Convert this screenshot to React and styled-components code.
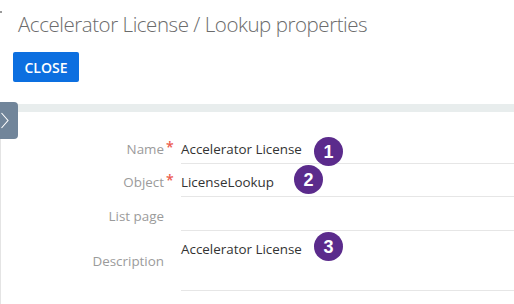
import React from "react";
import styled, { createGlobalStyle } from "styled-components";

const Global = createGlobalStyle`
  html, body { margin: 0; padding: 0; background: #fff; }
  body { font-family: "Open Sans", "Noto Sans", sans-serif; }
  * { box-sizing: border-box; }
`;

const Page = styled.div`
  position: relative;
  width: 514px;
  height: 304px;
  overflow: hidden;
  background: #fff;
`;

const Corner = styled.span`
  position: absolute;
  left: 0;
  top: 11px;
  width: 2px;
  height: 2px;
  background: #9a9a9a;
`;

const Header = styled.header`
  display: flex;
  flex-direction: column;
  align-items: flex-start;
  padding: 10px 0 0 13px;
`;

const Title = styled.h1`
  margin: 0 0 0 5px;
  font-size: 20.5px;
  line-height: 28px;
  font-weight: 300;
  color: #6b6b6b;
  letter-spacing: -0.45px;
  white-space: nowrap;
`;

const CloseButton = styled.button`
  margin-top: 14px;
  width: 66px;
  height: 30px;
  border: none;
  border-radius: 2px;
  background: #0c6fe0;
  color: #fff;
  font-family: "Open Sans", sans-serif;
  font-size: 14px;
  font-weight: 600;
  padding: 0;
  display: flex;
  align-items: center;
  justify-content: center;
`;

const Panel = styled.section`
  position: relative;
  margin-top: 22px;
  border-top: 8px solid #e8eded;
`;

const Body = styled.div`
  border-left: 1px solid #e4e4e4;
  padding-top: 18px;
  height: 200px;
`;

const Toggle = styled.div`
  position: absolute;
  left: 0;
  top: -10px;
  width: 18px;
  height: 37px;
  background: #71859a;
  border-radius: 0 4px 4px 0;
  display: flex;
  align-items: center;
`;

const Row = styled.div`
  display: grid;
  grid-template-columns: 163px 17px 1fr;
  height: ${(p) => p.$h}px;
`;

const Label = styled.div`
  display: flex;
  justify-content: flex-end;
  align-items: ${(p) => (p.$area ? "center" : "flex-end")};
  padding-bottom: ${(p) => (p.$area ? "0" : "6px")};
  font-size: 13.4px;
  line-height: 18px;
  color: #9b9b9b;
  white-space: nowrap;
`;

const Marker = styled.div`
  display: flex;
  align-items: flex-end;
  padding: 0 0 10px 2px;
  color: #ec5b4f;
  font-size: 14px;
  line-height: 14px;
  font-weight: 600;
`;

const Value = styled.div`
  position: relative;
  display: flex;
  align-items: ${(p) => (p.$area ? "flex-start" : "flex-end")};
  padding: ${(p) => (p.$area ? "9px 0 0 0" : "0 0 5px 0")};
  border-bottom: 1px solid #e6e6e6;
  font-size: 13.4px;
  line-height: 18px;
  color: #333;
  white-space: nowrap;
`;

const Badge = styled.span`
  position: absolute;
  left: ${(p) => p.$x}px;
  top: ${(p) => p.$y}px;
  width: 29px;
  height: 29px;
  border-radius: 50%;
  background: #5b2b8c;
  color: #fff;
  font-family: "Liberation Sans", Arial, sans-serif;
  font-weight: 700;
  font-size: 18px;
  display: flex;
  align-items: center;
  justify-content: center;
`;

const rows = [
  { label: "Name", req: true, value: "Accelerator License", h: 34, badge: { n: 1, x: 133, y: 7 } },
  { label: "Object", req: true, value: "LicenseLookup", h: 33, badge: { n: 2, x: 113, y: 1 } },
  { label: "List page", req: false, value: "", h: 34 },
  { label: "Description", req: false, value: "Accelerator License", h: 60, area: true, badge: { n: 3, x: 133, y: 1 } },
];

export default function App() {
  return (
    <>
      <Global />
      <Page>
        <Corner />
        <Header>
          <Title>Accelerator License / Lookup properties</Title>
          <CloseButton>CLOSE</CloseButton>
        </Header>
        <Panel>
          <Toggle>
            <svg width="18" height="37" viewBox="0 0 18 37">
              <polyline points="1.5,11 8,18.5 1.5,26" fill="none" stroke="#fff" strokeWidth="1.1" />
            </svg>
          </Toggle>
          <Body>
            {rows.map((r) => (
              <Row key={r.label} $h={r.h}>
                <Label $area={r.area}>{r.label}</Label>
                <Marker>{r.req ? "*" : ""}</Marker>
                <Value $area={r.area}>
                  {r.value}
                  {r.badge && (
                    <Badge $x={r.badge.x} $y={r.badge.y}>
                      {r.badge.n}
                    </Badge>
                  )}
                </Value>
              </Row>
            ))}
          </Body>
        </Panel>
      </Page>
    </>
  );
}
